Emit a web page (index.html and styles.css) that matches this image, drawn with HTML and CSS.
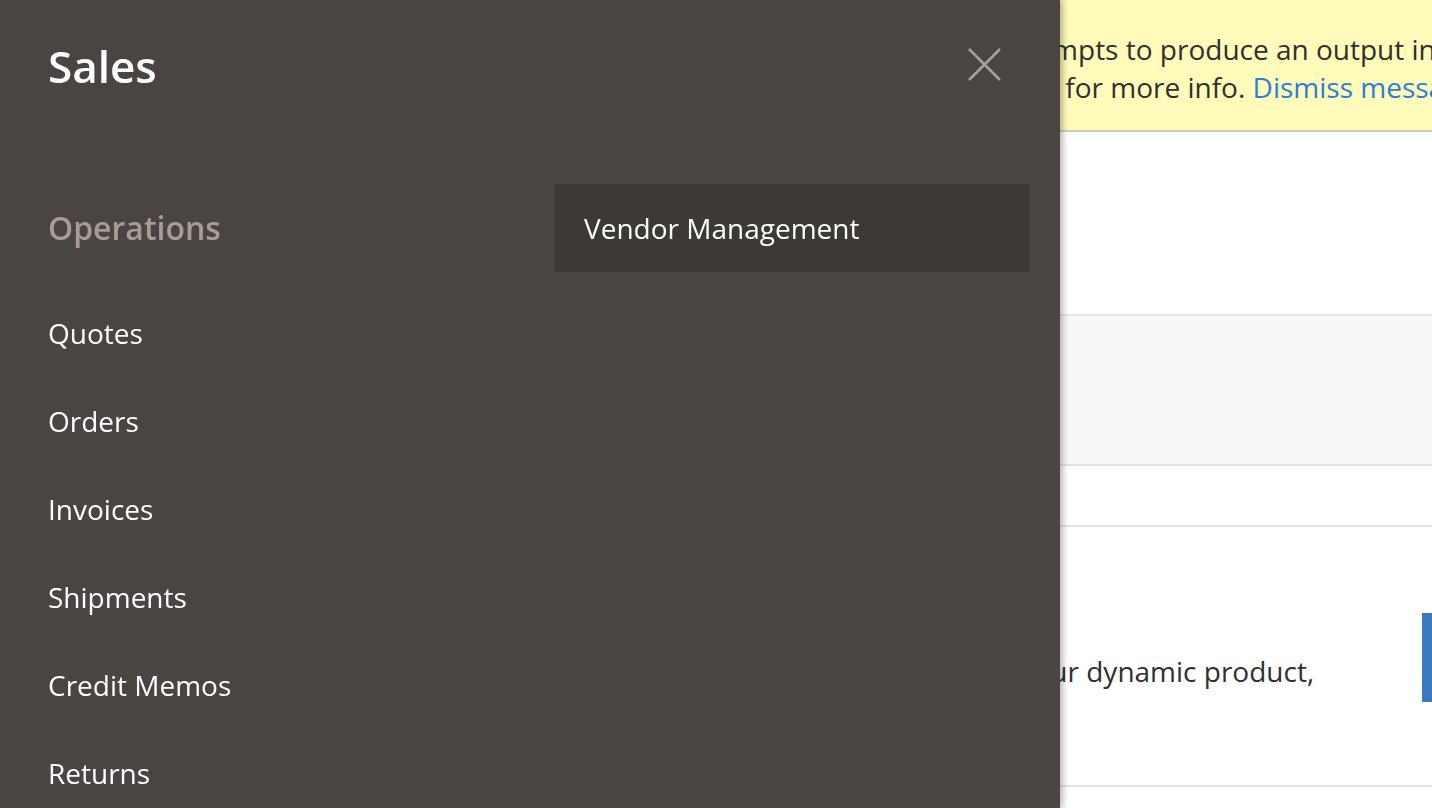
FILE: index.html
```html
<!DOCTYPE html>
<html lang="en">
<head>
<meta charset="utf-8">
<title>Sales</title>
<link rel="stylesheet" href="styles.css">
</head>
<body>
<div class="page">
  <div class="message">
    <div class="msg-line">this tool attempts to produce an output in</div>
    <div class="msg-line msg-line-next">see the index for more info. <a class="msg-link" href="#">Dismiss message</a></div>
  </div>
  <div class="toolbar"></div>
  <div class="grid-head"></div>
  <div class="grid-row"></div>
  <div class="promo">
    <p class="promo-text">to publish your dynamic product,</p>
    <a class="promo-button" href="#">Get started</a>
  </div>
</div>

<nav class="menu-panel">
  <div class="menu-header">
    <h1 class="menu-title">Sales</h1>
    <button class="menu-close" aria-label="Close">
      <svg width="33" height="33" viewBox="0 0 33 33"><path d="M1 1 L32 32 M32 1 L1 32" stroke="#a8a19b" stroke-width="2.6" fill="none"/></svg>
    </button>
  </div>
  <div class="menu-columns">
    <ul class="menu-group">
      <li class="group-title">Operations</li>
      <li class="menu-item">Quotes</li>
      <li class="menu-item">Orders</li>
      <li class="menu-item">Invoices</li>
      <li class="menu-item">Shipments</li>
      <li class="menu-item">Credit Memos</li>
      <li class="menu-item">Returns</li>
    </ul>
    <ul class="menu-group">
      <li class="menu-item active">Vendor Management</li>
    </ul>
  </div>
</nav>
</body>
</html>
```

FILE: styles.css
```css
html, body {
  margin: 0;
  padding: 0;
  overflow: hidden;
  height: 100%;
}
body {
  font-family: "Open Sans", "Liberation Sans", sans-serif;
  background: #fff;
  color: #303030;
}
.page {
  width: 1432px;
  display: flex;
  flex-direction: column;
}
.message {
  background: #fffbbb;
  padding: 30px 0 24px 888px;
  border-bottom: 2px solid #cfcbc4;
  font-size: 28px;
  line-height: 38px;
  white-space: nowrap;
  color: #303030;
}
.msg-line-next {
  margin-left: -4px;
}
.msg-link {
  color: #2a7fd6;
  text-decoration: none;
}
.toolbar {
  height: 182px;
}
.grid-head {
  height: 148px;
  background: #f8f8f8;
  border-top: 2px solid #e3e3e3;
  border-bottom: 2px solid #e3e3e3;
}
.grid-row {
  height: 59px;
  border-bottom: 2px solid #e3e3e3;
}
.promo {
  height: 172px;
  padding: 86px 0 0 882px;
  border-bottom: 2px solid #e3e3e3;
  display: flex;
  align-items: flex-start;
  white-space: nowrap;
}
.promo-text {
  margin: 39px 0 0;
  width: 540px;
  flex: none;
  font-size: 28px;
  line-height: 38px;
  color: #303030;
}
.promo-button {
  flex: none;
  box-sizing: border-box;
  width: 220px;
  height: 89px;
  padding: 26px 0 0 40px;
  background: #3a7bbd;
  color: #fff;
  font-size: 26px;
  text-decoration: none;
}

.menu-panel {
  position: fixed;
  top: 0;
  left: 0;
  bottom: 0;
  width: 1060px;
  background: #4a4542;
  box-shadow: 3px 0 6px rgba(0, 0, 0, 0.28);
  z-index: 10;
}
.menu-header {
  display: flex;
  justify-content: space-between;
  align-items: flex-start;
  padding: 36px 59px 0 48px;
}
.menu-title {
  margin: 0;
  font-size: 44px;
  line-height: 60px;
  font-weight: 600;
  color: #fff;
}
.menu-close {
  margin-top: 12px;
  padding: 0;
  border: 0;
  background: none;
  width: 33px;
  height: 33px;
  display: block;
}
.menu-close svg {
  display: block;
}
.menu-columns {
  display: grid;
  grid-template-columns: 476px 476px;
  column-gap: 30px;
  margin-top: 88px;
  padding-left: 48px;
}
.menu-group {
  list-style: none;
  margin: 0;
  padding: 0;
}
.group-title {
  font-size: 32px;
  line-height: 88px;
  font-weight: 600;
  color: #a79d95;
  margin-bottom: 17px;
}
.menu-item {
  font-size: 28px;
  line-height: 88px;
  color: #fff;
}
.menu-item.active {
  background: #3d3935;
  padding-left: 30px;
}
```
